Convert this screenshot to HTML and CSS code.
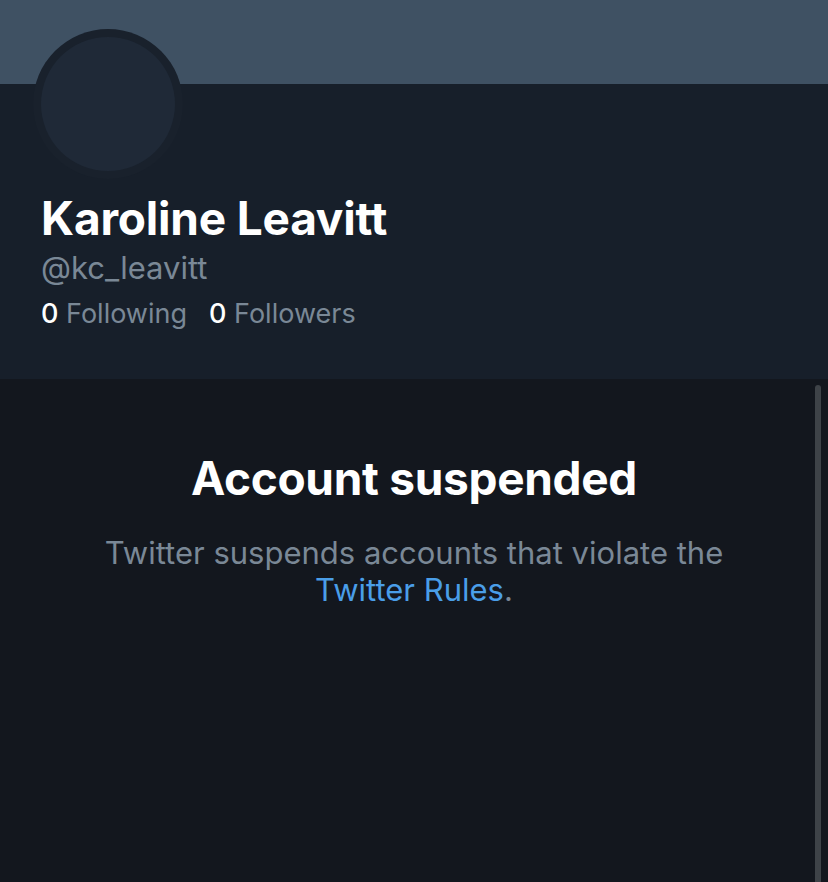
FILE: index.html
```html
<!DOCTYPE html>
<html>
<head>
<meta charset="utf-8">
<link rel="stylesheet" href="styles.css">
</head>
<body>
<div class="page">
  <div class="banner"></div>
  <div class="header">
    <div class="avatar"><div class="avatar-inner"></div></div>
    <div class="name">Karoline Leavitt</div>
    <div class="handle">@kc_leavitt</div>
    <div class="stats">
      <span class="stat"><b>0</b> Following</span>
      <span class="stat"><b>0</b> Followers</span>
    </div>
  </div>
  <div class="content">
    <div class="message">
      <h1 class="title">Account suspended</h1>
      <p class="desc">Twitter suspends accounts that violate the <a class="link">Twitter Rules</a>.</p>
    </div>
    <div class="scrollbar"></div>
  </div>
</div>
</body>
</html>
```
FILE: styles.css
```css
html, body {
  margin: 0;
  padding: 0;
  background: #13171e;
}
.page {
  width: 828px;
  height: 882px;
  overflow: hidden;
  font-family: Inter, "Noto Sans", sans-serif;
  display: flex;
  flex-direction: column;
}
.banner {
  height: 84px;
  flex: none;
  background: #3f5163;
}
.header {
  background: #171f2a;
  height: 295px;
  flex: none;
  padding: 0 41px;
  box-sizing: border-box;
  position: relative;
}
.avatar {
  position: absolute;
  left: 33px;
  top: -55px;
  width: 150px;
  height: 150px;
  border-radius: 50%;
  background: #19212c;
  display: flex;
  align-items: center;
  justify-content: center;
}
.avatar-inner {
  width: 134px;
  height: 134px;
  border-radius: 50%;
  background: #1f2937;
}
.name {
  padding-top: 109px;
  color: #ffffff;
  font-weight: 700;
  font-size: 46px;
  line-height: 50px;
  letter-spacing: -0.2px;
}
.handle {
  color: #7a8896;
  font-size: 31px;
  line-height: 40px;
  margin-top: 5px;
}
.stats {
  display: flex;
  gap: 22px;
  margin-top: 6px;
  font-size: 27px;
  line-height: 40px;
  color: #7a8896;
}
.stat b {
  color: #ffffff;
  font-weight: 500;
}
.content {
  flex: 1;
  position: relative;
  background: #13171e;
}
.message {
  text-align: center;
  padding-top: 71px;
}
.title {
  margin: 0;
  color: #ffffff;
  font-size: 46px;
  font-weight: 700;
  line-height: 56px;
  letter-spacing: -0.3px;
}
.desc {
  margin: 28px auto 0;
  width: 660px;
  color: #7a8896;
  font-size: 31px;
  line-height: 37px;
}
.link {
  color: #4a9ee8;
}
.scrollbar {
  position: absolute;
  right: 7px;
  top: 6px;
  width: 6px;
  height: 600px;
  border-radius: 3px;
  background: #3e4348;
}
```
